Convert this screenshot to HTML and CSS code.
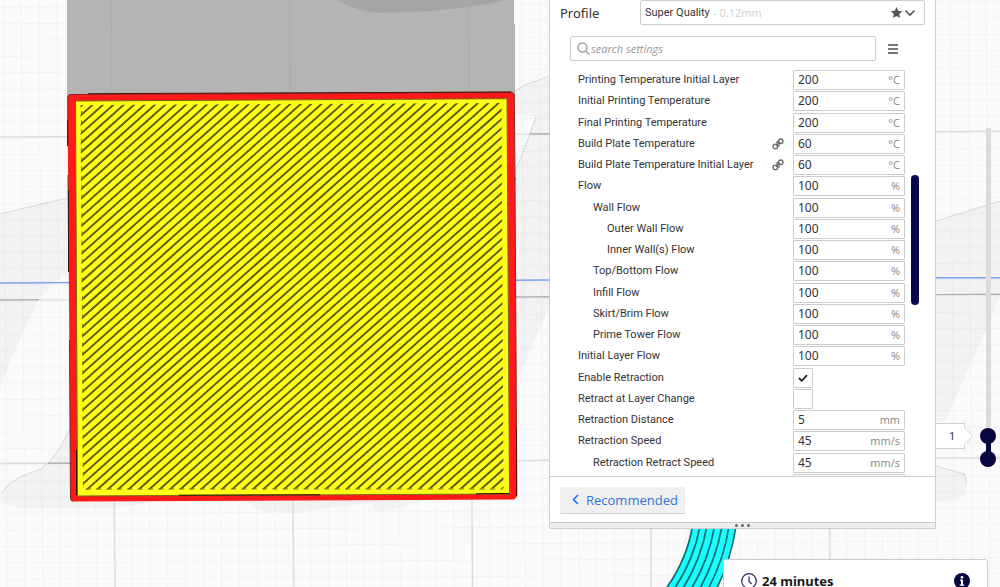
FILE: index.html
```html
<!DOCTYPE html>
<html lang="en">
<head>
<meta charset="utf-8">
<title>Print settings</title>
<link rel="stylesheet" href="styles.css">
</head>
<body>
<main class="workspace">
<svg class="viewport" viewBox="0 0 1000 587" preserveAspectRatio="xMidYMid slice" aria-hidden="true">
  <defs>
    <pattern id="grid" width="17.87" height="16.34" patternUnits="userSpaceOnUse" patternTransform="matrix(1 -.0058 .0067 1 110.8 137)">
      <path d="M.5 0V17M0 .5H18" stroke="#000" stroke-opacity=".03" fill="none"/>
    </pattern>
    <clipPath id="infill"><path d="M80.500 105L501.500 103L503.500 488.500L83 489.500Z"/></clipPath>
  </defs>
  <rect width="1000" height="587" fill="#fafafa"/>
  <g fill="#f2f2f2">
    <path d="M0 214L67 198L70 271Q52 280 39 300Q18 340 0 387Z"/>
    <path d="M72 425L60 448L51 460L41 469L20 477L9 484L1 494L3 503L20 508H110L150 503V430Z"/>
    <path d="M240 498L262 511L295 513L340 506L420 498ZM370 498L375 511H385L425 500Z"/>
    <path d="M514 92L525 85L550 77V304L514 388Z"/>
    <path d="M936 221L1000 201V297L945 422H936ZM936 466L965 474L967 483L965 495L955 500L936 502Z"/>
  </g>
  <path d="M514 114L536 117L522 155L514 173Z" fill="#fafafa"/>
  <path d="M0 214L67 198M72 425L60 448L51 460L41 469L20 477L9 484L1 494M514 92L525 85L550 76M936 221L1000 201M936 466L964 474" fill="none" stroke="#d8d8d8"/>
  <path d="M536 117L522 155L514 173M964 474L967 483" fill="none" stroke="#c4c4c4" stroke-dasharray="2 1"/>
  <rect width="1000" height="587" fill="url(#grid)"/>
  <path d="M0 137L1000 131.3M0 463.5L1000 457.5M111 0L115 587M289.700 0L293.700 587M468.400 0L472.600 587M651 500V587M830 500V587" stroke="#dedede" stroke-width="1.400" fill="none"/>
  <path d="M0 300L39 299.800M515 297L550 296.800M936 294.600L1000 294.300M530 134L550 133.800M48 463.200H70" stroke="#b2b2b2" stroke-width="1.400"/>
  <path d="M39 299.800H70" stroke="#e0e0e0" stroke-width="1.400"/>
  <path d="M0 283L550 280M936 277.700H1000" stroke="#74a5f3" stroke-width="1.400"/>
  <path d="M67 0H514V24H515V98H67Z" fill="#b4b4b4"/>
  <path d="M337 0Q350 8 373 12.700Q400 13 430 11Q470 8 508 0Z" fill="#a5a5a5"/>
  <path d="M111.300 0L112 94M289.700 0L290.500 94M468.500 0L469.500 94" stroke="#acacac"/>
  <path d="M70 94.500L511 92Q514 92 514.300 96L517 496Q516 499 514 499.500L75 501.500Q71 502 70.500 498L67.500 98Q67 95 70 94.500Z" fill="#ff1a1a"/>
  <path d="M67.800 146V97Q68 95 70 94.500L511 92.200Q514 92 514.300 96L515 180M68 175L68.800 272M69.500 340L70.500 498Q70.500 501 73 501.500M515 178L516.800 496" fill="none" stroke="#8a2222"/>
  <path d="M88 93.700L511 92M67.500 120V146M68.500 190V272M516.500 429V496" stroke="#45150f"/>
  <path d="M75.500 101L507 98.700L509.500 494L77.500 496Z" fill="#ffff17" stroke="#7a6414"/>
  <path d="M179 495.200L320 494.800M476 493.800L509 493.500M76.500 450V495" stroke="#201008"/>
  <g clip-path="url(#infill)">
    <path d="M125.100 -20H720" transform="rotate(48.210)" stroke="#5b5b0e" stroke-width="640" stroke-dasharray="1.900 5.004"/>
  </g>
  <path d="M81.500 111L83.500 489" stroke="#77770e" stroke-dasharray="4 5.260"/>
  <path d="M86 489H503" stroke="#77770e" stroke-dasharray="5 5.360"/>
  <path d="M692 526Q687 560 665 590H716Q731 560 736 526Z" fill="#18ffff"/>
  <path d="M692.500 526Q687 560 665 590M700 526Q694 560 673.500 590M707 526Q701 560 682 590M714.500 526Q709 560 690.500 590M722 526Q716 560 699 590M729 526Q724 560 707.500 590M736 526Q731 560 716 590" fill="none" stroke="#176d70" stroke-width="1.700"/>
</svg>

<section class="panel" aria-label="Print settings">
  <div class="profile">
    <label class="profile-label" for="profile">Profile</label>
    <div class="picker">
      <select id="profile"><option>Super Quality</option></select>
      <div class="picker-extra">
        <span class="height">- 0.12mm</span>
        <svg width="27" height="14" viewBox="0 0 27 14" aria-hidden="true"><path d="M6.500 1l1.700 3.800 4.100.4-3.100 2.700.9 4.100-3.600-2.100L2.900 12l.9-4.100L.7 5.200l4.100-.4z" fill="#555"/><path d="M15.500 4.500L20 9l4.500-4.500" fill="none" stroke="#555" stroke-width="1.600"/></svg>
      </div>
    </div>
  </div>
  <div class="search-row">
    <label class="search">
      <svg width="13" height="13" viewBox="0 0 13 13" aria-hidden="true"><circle cx="5.500" cy="5.500" r="4.500" fill="none" stroke="#a2a2a2" stroke-width="1.500"/><path d="M9 9l3.500 3.500" stroke="#a2a2a2" stroke-width="1.500"/></svg>
      <input type="text" placeholder="search settings" aria-label="search settings">
    </label>
    <button class="menu" type="button" aria-label="Setting visibility"><svg width="10" height="10" viewBox="0 0 10 10"><path d="M0 1h10M0 5h10M0 9h10" stroke="#4c4c4c" stroke-width="1.600"/></svg></button>
  </div>
  <div class="list-area">
    <div class="settings">
      <div class="row"><label for="s1">Printing Temperature Initial Layer</label><span class="field"><input id="s1" value="200"><span>°C</span></span></div>
      <div class="row"><label for="s2">Initial Printing Temperature</label><span class="field"><input id="s2" value="200"><span>°C</span></span></div>
      <div class="row"><label for="s3">Final Printing Temperature</label><span class="field"><input id="s3" value="200"><span>°C</span></span></div>
      <div class="row"><label for="s4">Build Plate Temperature</label><svg class="link" viewBox="0 0 12 12"><g fill="none" stroke="#666" stroke-width="1.300"><circle cx="3.300" cy="8.500" r="2.300"/><circle cx="8.700" cy="3.300" r="2.300"/><path d="M4 7.700l4-3.700M5.500 8.500q2 0 1.700-2.200M4.800 5.500q-.2-2 1.600-2.200"/></g></svg><span class="field"><input id="s4" value="60"><span>°C</span></span></div>
      <div class="row"><label for="s5">Build Plate Temperature Initial Layer</label><svg class="link" viewBox="0 0 12 12"><g fill="none" stroke="#666" stroke-width="1.300"><circle cx="3.300" cy="8.500" r="2.300"/><circle cx="8.700" cy="3.300" r="2.300"/><path d="M4 7.700l4-3.700M5.500 8.500q2 0 1.700-2.200M4.800 5.500q-.2-2 1.600-2.200"/></g></svg><span class="field"><input id="s5" value="60"><span>°C</span></span></div>
      <div class="row"><label for="s6">Flow</label><span class="field"><input id="s6" value="100"><span>%</span></span></div>
      <div class="row level-1"><label for="s7">Wall Flow</label><span class="field"><input id="s7" value="100"><span>%</span></span></div>
      <div class="row level-2"><label for="s8">Outer Wall Flow</label><span class="field"><input id="s8" value="100"><span>%</span></span></div>
      <div class="row level-2"><label for="s9">Inner Wall(s) Flow</label><span class="field"><input id="s9" value="100"><span>%</span></span></div>
      <div class="row level-1"><label for="s10">Top/Bottom Flow</label><span class="field"><input id="s10" value="100"><span>%</span></span></div>
      <div class="row level-1"><label for="s11">Infill Flow</label><span class="field"><input id="s11" value="100"><span>%</span></span></div>
      <div class="row level-1"><label for="s12">Skirt/Brim Flow</label><span class="field"><input id="s12" value="100"><span>%</span></span></div>
      <div class="row level-1"><label for="s13">Prime Tower Flow</label><span class="field"><input id="s13" value="100"><span>%</span></span></div>
      <div class="row"><label for="s14">Initial Layer Flow</label><span class="field"><input id="s14" value="100"><span>%</span></span></div>
      <div class="row"><label for="s15">Enable Retraction</label><span class="check"><input id="s15" type="checkbox" checked><svg viewBox="0 0 10 8"><path d="M1 4l2.800 2.800L9 1.200" fill="none" stroke="#222" stroke-width="1.800"/></svg></span></div>
      <div class="row"><label for="s16">Retract at Layer Change</label><span class="check"><input id="s16" type="checkbox"></span></div>
      <div class="row"><label for="s17">Retraction Distance</label><span class="field"><input id="s17" value="5"><span>mm</span></span></div>
      <div class="row"><label for="s18">Retraction Speed</label><span class="field"><input id="s18" value="45"><span>mm/s</span></span></div>
      <div class="row level-1"><label for="s19">Retraction Retract Speed</label><span class="field"><input id="s19" value="45"><span>mm/s</span></span></div>
      <div class="row"><span class="field" aria-hidden="true"></span></div>
    </div>
    <div class="scrollbar"></div>
  </div>
  <footer class="footer">
    <button class="recommended" type="button"><svg width="7" height="11" viewBox="0 0 7 11" aria-hidden="true"><path d="M6 1L1.500 5.500L6 10" fill="none" stroke="#196ef0" stroke-width="1.500"/></svg>Recommended</button>
  </footer>
  <div class="grip"><i></i><i></i><i></i></div>
</section>

<div class="layer-tag"><output>1</output><svg width="9" height="26" viewBox="0 0 9 26" aria-hidden="true"><path d="M0 0V4L9 13L0 22V26Z" fill="#fff"/><path d="M.5 0V4.500L8.500 13L.5 21.500V26" fill="none" stroke="#d0d0d0"/></svg></div>
<div class="layers">
  <input type="range" min="0" max="100" value="7" aria-label="Top layer">
  <input type="range" min="0" max="100" value="0" aria-label="Bottom layer">
</div>

<section class="summary" aria-label="Print time">
  <svg width="16" height="16" viewBox="0 0 16 16" aria-hidden="true"><circle cx="8" cy="8" r="7.300" fill="none" stroke="#26265c" stroke-width="1.200"/><path d="M8 3.500V8.500L10.500 11" fill="none" stroke="#26265c" stroke-width="1.200"/></svg>
  <strong>24 minutes</strong>
  <svg class="info" width="16" height="16" viewBox="0 0 16 16" role="img" aria-label="Details"><circle cx="8" cy="8" r="8" fill="#08083f"/><circle cx="8" cy="4.200" r="1.300" fill="#fff"/><path d="M6 6.500h3v5h1.200v1.200H5.800v-1.200H7V7.700H6z" fill="#fff"/></svg>
</section>
</main>
</body>
</html>
```
FILE: styles.css
```css
* { box-sizing: border-box; }
body { margin: 0; font: 12px/16px "Noto Sans", sans-serif; color: #333; }
input, select, button { font: inherit; color: inherit; }
.workspace { position: relative; height: 100vh; min-height: 560px; overflow: hidden; background: #fafafa; }
.viewport { position: absolute; inset: 0; width: 100%; height: 100%; }

.panel { position: absolute; top: 0; right: 64px; width: 387px; background: #fff; border: solid #cfcfcf; border-width: 0 1px 1px; border-radius: 0 0 2px 2px; }
.profile { display: flex; align-items: center; padding: 0 10px; }
.profile-label { flex: 1; font-size: 13px; }
.picker { position: relative; width: 285px; height: 25px; }
.picker select { width: 100%; height: 100%; padding: 0 4px; appearance: none; background: #fff; border: 1px solid #ccc; border-radius: 2px; font-family: Roboto, sans-serif; font-size: 11px; }
.picker-extra { position: absolute; inset: 0 8px 0 73px; display: flex; justify-content: space-between; align-items: center; pointer-events: none; }
.height { color: #d2d2d2; font-size: 11px; }

.search-row { display: flex; align-items: center; gap: 12px; padding: 11px 37px 9px 20px; }
.search { flex: 1; height: 25px; display: flex; align-items: center; gap: 1px; padding: 0 6px; border: 1px solid #ccc; border-radius: 2px; }
.search input { flex: 1; min-width: 0; padding: 0; border: 0; outline: 0; background: none; font-family: "Open Sans", sans-serif; font-size: 11px; }
.search input::placeholder { color: #999; font-style: italic; opacity: 1; }
.menu { display: grid; padding: 0; border: 0; background: none; }

.list-area { position: relative; height: 406px; overflow: hidden; padding: 0 30px 0 28px; }
.settings { display: grid; grid-auto-rows: 1fr; height: 425px; }
.row { display: grid; grid-template-columns: minmax(0, 1fr) 21px 112px; align-items: start; }
.row label { grid-column: 1; font-family: Roboto, sans-serif; font-size: 11px; line-height: 20px; white-space: nowrap; }
.level-1 label { padding-left: 15px; }
.level-2 label { padding-left: 29px; }
.link { grid-column: 2; width: 12px; height: 20px; }
.field, .check { grid-column: 3; grid-row: 1; height: 20px; border: 1px solid #ccc; border-radius: 1px; background: #fff; }
.field { display: flex; align-items: center; padding: 0 4px; }
.field input { flex: 1; min-width: 0; padding: 0; border: 0; outline: 0; background: none; }
.field span { color: #888; font-family: "Open Sans", sans-serif; font-size: 11px; }
.check { position: relative; width: 20px; }
.check input { display: block; width: 100%; height: 100%; margin: 0; appearance: none; }
.check svg { position: absolute; inset: 5px 4px; width: 10px; height: 8px; pointer-events: none; }
.scrollbar { position: absolute; top: 105px; right: 16px; width: 8px; height: 130px; border-radius: 4px; background: #08084f; }

.footer { padding: 10px; height: 46px; border-top: 1px solid #ccc; }
.recommended { display: flex; align-items: center; gap: 7px; height: 27px; padding: 0 7px 1px 12px; border: 0; border-bottom: 1px solid #d0d0d0; border-radius: 1px; background: #f0f0f0; color: #2f73dc; font-family: "Open Sans", sans-serif; font-size: 13px; }
.grip { display: flex; justify-content: center; gap: 3px; height: 6px; padding-top: 1px; background: #eee; border-top: 1px solid #ccc; }
.grip i { width: 3px; height: 3px; border-radius: 50%; background: #666; }

.layer-tag { position: absolute; top: 423px; right: 27px; display: flex; }
.layer-tag output { width: 28px; height: 26px; padding-left: 13px; line-height: 24px; font-size: 11px; background: #fff; border: solid #d0d0d0; border-width: 1px 0; }
.layers { position: absolute; top: 128px; right: 4px; width: 16px; height: 339px; background: linear-gradient(#08083f, #08083f) 6px 308px / 5px 23px no-repeat, linear-gradient(#dcdcdc, #dcdcdc) 6px 0 / 5px 331px no-repeat; }
.layers input { position: absolute; inset: 0; width: 16px; height: 100%; margin: 0; appearance: none; background: none; writing-mode: vertical-lr; direction: rtl; pointer-events: none; }
.layers input::-webkit-slider-thumb { appearance: none; width: 16px; height: 16px; border-radius: 50%; background: #08083f; pointer-events: auto; }

.summary { position: absolute; top: 559px; right: 12px; width: 265px; height: 80px; display: flex; align-items: flex-start; gap: 5px; padding: 13px 17px; background: #fff; border: 1px solid #ccc; border-radius: 3px; }
.summary strong { font-size: 13px; line-height: 16px; color: #191919; }
.info { margin-left: auto; }
```
